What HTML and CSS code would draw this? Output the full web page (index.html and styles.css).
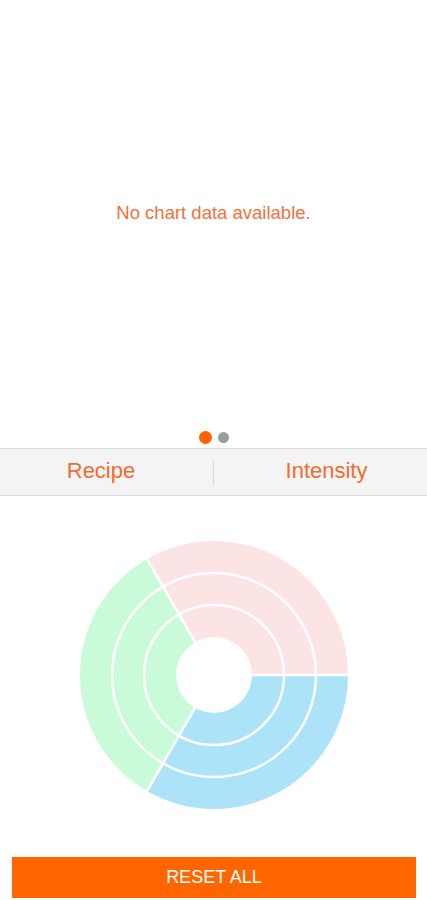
FILE: index.html
```html
<!DOCTYPE html>
<html lang="en">
<head>
  <meta charset="UTF-8" />
  <meta name="viewport" content="width=device-width, initial-scale=1.0" />
  <title>Chart</title>
  <link rel="stylesheet" href="styles.css">
</head>
<body>
  <div class="pager">
    <p class="empty">No chart data available.</p>
  </div>

  <div class="dots">
    <span class="dot active"></span>
    <span class="dot"></span>
  </div>

  <div class="tabs">
    <div class="tab tab-left">Recipe</div>
    <div class="tab tab-right">Intensity</div>
  </div>

  <div class="chart">
    <svg width="268" height="268" viewBox="0 0 268 268">
      <!-- three equal sectors, starting at 3 o'clock -->
      <path d="M134,134 L268,134 A134,134 0 0 1 67,250.05 Z" fill="#ade3f8" />
      <path d="M134,134 L67,250.05 A134,134 0 0 1 67,17.95 Z" fill="#c9fbd9" />
      <path d="M134,134 L67,17.95 A134,134 0 0 1 268,134 Z" fill="#fde4e4" />
      <g stroke="#fff" stroke-width="2.5" fill="none">
        <circle cx="134" cy="134" r="70" />
        <circle cx="134" cy="134" r="102" />
        <line x1="134" y1="134" x2="269" y2="134" />
        <line x1="134" y1="134" x2="66.5" y2="250.9" />
        <line x1="134" y1="134" x2="66.5" y2="17.1" />
      </g>
      <circle cx="134" cy="134" r="38" fill="#fff" />
    </svg>
  </div>

  <button class="reset">RESET ALL</button>
</body>
</html>
```

FILE: styles.css
```css
body {
  font-family: "Liberation Sans", Arial, sans-serif;
  margin: 0;
  background: #fff;
  color: #333;
}

.pager {
  height: 426px;
  display: flex;
  align-items: center;
  justify-content: center;
}

.empty {
  margin: 0;
  font-size: 18.5px;
  color: #f0713b;
}

.dots {
  height: 22px;
  display: flex;
  justify-content: center;
  align-items: center;
  gap: 6px;
  padding-left: 1px;
}

.dot {
  width: 11px;
  height: 11px;
  border-radius: 50%;
  background: #9b9b9b;
}

.dot.active {
  width: 13px;
  height: 13px;
  background: #ff6200;
}

.tabs {
  display: grid;
  grid-template-columns: 214px 1fr;
  height: 46px;
  background: #f4f4f4;
  border-top: 1px solid #dcdcdc;
  border-bottom: 1px solid #dcdcdc;
}

.tab {
  display: flex;
  align-items: center;
  justify-content: center;
  font-size: 22px;
  color: #f26b30;
  padding-bottom: 3px;
}

.tab-left {
  padding-right: 12px;
  position: relative;
}

.tab-left::after {
  content: "";
  position: absolute;
  right: 0;
  top: 12px;
  bottom: 9px;
  width: 1px;
  background: #d6d6d6;
}

.tab-right {
  padding-left: 12px;
}

.chart {
  display: flex;
  justify-content: center;
  padding: 45px 0 48px 1px;
}

.chart svg {
  display: block;
}

.reset {
  display: block;
  width: 404px;
  height: 41px;
  margin: 0 0 0 12px;
  background: #ff6600;
  color: #fff;
  border: none;
  font-family: inherit;
  font-size: 18px;
  cursor: pointer;
}
```
